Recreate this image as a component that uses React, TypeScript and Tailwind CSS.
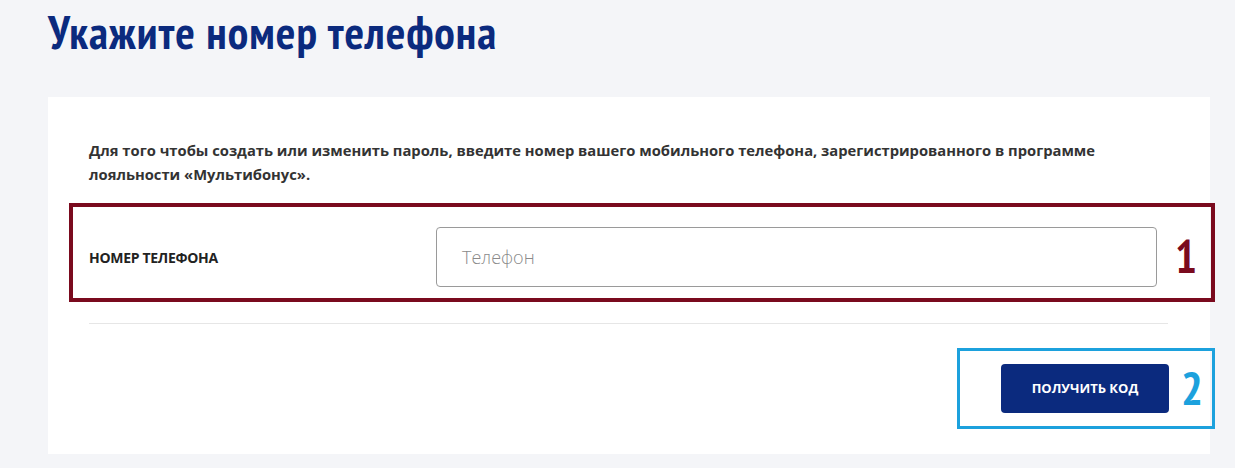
import React from "react";

const narrow = '"PT Sans Narrow", "Liberation Sans Narrow", "DejaVu Sans Condensed", sans-serif';

export default function App() {
  return (
    <div className="w-[1235px] h-[468px] bg-[#f4f5f8] overflow-hidden relative" style={{ fontFamily: '"Open Sans", "Noto Sans", sans-serif' }}>
      <div className="pl-[48px] pt-[7px]">
        <h1
          className="text-[46px] leading-[50px] font-bold text-[#0b2a7e] tracking-[1px]"
          style={{ fontFamily: narrow }}
        >
          Укажите номер телефона
        </h1>
        <div className="mt-[40px] w-[1162px] h-[357px] bg-white pt-[41px] px-[41px] flex flex-col">
          <p className="text-[14.75px] leading-[24px] font-bold text-[#333333] w-[1075px]">
            Для того чтобы создать или изменить пароль, введите номер вашего мобильного телефона, зарегистрированного в программе лояльности «Мультибонус».
          </p>
          <div className="mt-[41px] flex items-center">
            <div className="w-[347px] text-[14px] font-bold text-[#222222] uppercase tracking-[-0.3px]">Номер телефона</div>
            <div className="w-[721px] h-[60px] border border-[#9a9a9a] rounded-[4px] flex items-center pl-[25px] text-[18px] text-[#8a8a8a] font-light">
              Телефон
            </div>
          </div>
          <div className="mt-[36px] h-px bg-[#e6e6e6] w-[1079px]" />
          <div className="mt-[40px] flex justify-end w-[1080px]">
            <button className="w-[168px] h-[49px] bg-[#0b2a7e] rounded-[4px] text-white text-[13px] font-bold uppercase">
              Получить код
            </button>
          </div>
        </div>
      </div>

      <div className="absolute left-[69px] top-[203px] w-[1146px] h-[99px] border-[4px] border-[#7a0a1e]" />
      <div
        className="absolute left-[1175px] top-[231px] text-[46px] leading-[50px] font-bold text-[#7a0a1e]"
        style={{ fontFamily: narrow }}
      >
        1
      </div>

      <div className="absolute left-[957px] top-[348px] w-[258px] h-[81px] border-[3px] border-[#1ca1dd]" />
      <div
        className="absolute left-[1181px] top-[363px] text-[46px] leading-[50px] font-bold text-[#1ca1dd]"
        style={{ fontFamily: narrow }}
      >
        2
      </div>
    </div>
  );
}
